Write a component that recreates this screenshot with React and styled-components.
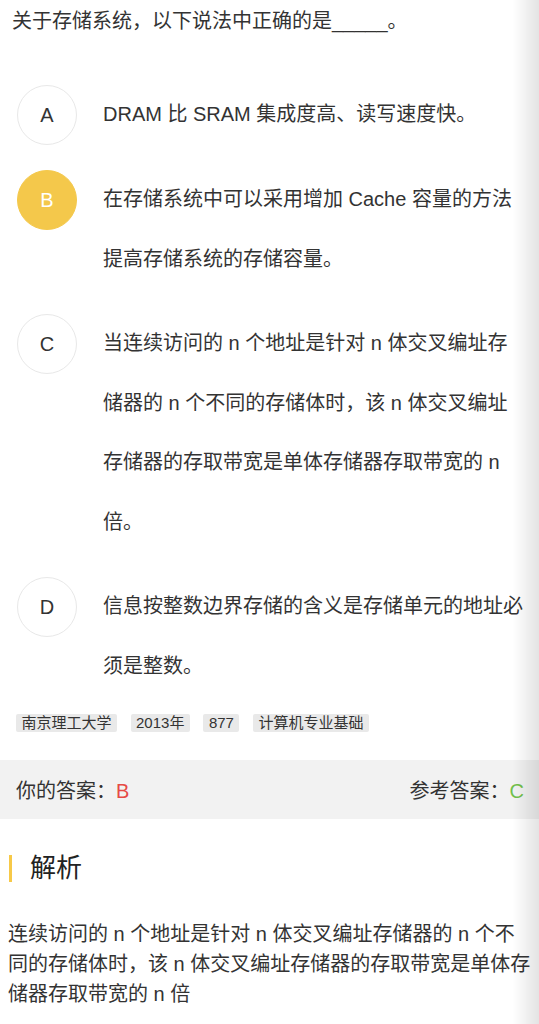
import React from 'react';
import styled, { createGlobalStyle } from 'styled-components';

const GlobalStyle = createGlobalStyle`
  body {
    margin: 0;
    background: #fff;
    font-family: "Liberation Sans", "Noto Sans CJK SC", sans-serif;
    color: #333;
  }
`;

const Page = styled.div`
  width: 539px;
  position: relative;
  padding-bottom: 40px;
`;

const EdgeShade = styled.div`
  position: fixed;
  top: 0;
  right: 0;
  width: 26px;
  height: 100vh;
  pointer-events: none;
  background: linear-gradient(to right, rgba(0, 0, 0, 0), rgba(0, 0, 0, 0.11));
`;

const Question = styled.div`
  padding: 6px 12px 0;
  font-size: 20px;
  line-height: 30px;
`;

const OptionList = styled.div`
  margin-top: 49px;
  display: flex;
  flex-direction: column;
  gap: 25px;
`;

const OptionRow = styled.div`
  display: flex;
  align-items: flex-start;
  padding: 0 14px 0 17px;
  gap: 26px;
`;

const Circle = styled.div`
  flex: none;
  width: 60px;
  height: 60px;
  box-sizing: border-box;
  border-radius: 50%;
  border: 1px solid ${(p) => (p.$picked ? '#f4c84b' : '#e8e8e8')};
  background: ${(p) => (p.$picked ? '#f4c84b' : '#fff')};
  color: ${(p) => (p.$picked ? '#fff' : '#333')};
  display: flex;
  align-items: center;
  justify-content: center;
  font-size: 20px;
`;

const OptionText = styled.div`
  flex: 1;
  font-size: 20px;
  line-height: 59.5px;
`;

const Tags = styled.div`
  display: flex;
  gap: 13.5px;
  padding: 0 16px;
  margin-top: 18px;
`;

const Tag = styled.span`
  font-size: 15px;
  line-height: 18px;
  padding: 0 5.5px;
  background: #e9e9e9;
  border-radius: 2px;
  color: #333;
`;

const AnswerBar = styled.div`
  margin-top: 28px;
  height: 59px;
  background: #f2f2f2;
  display: flex;
  align-items: center;
  justify-content: space-between;
  padding: 0 15px 0 16px;
  font-size: 20px;
`;

const Mark = styled.span`
  color: ${(p) => p.$color};
`;

const SectionTitle = styled.div`
  margin-top: 32px;
  display: flex;
  align-items: center;
  gap: 18px;
  padding-left: 9px;
  font-size: 26px;
  line-height: 34px;
  color: #222;
`;

const TitleBar = styled.span`
  width: 3px;
  height: 27px;
  background: #f7c948;
`;

const Analysis = styled.div`
  margin-top: 34px;
  padding: 0 8px;
  font-size: 20px;
  line-height: 30px;
`;

const options = [
  { key: 'A', text: 'DRAM 比 SRAM 集成度高、读写速度快。' },
  { key: 'B', text: '在存储系统中可以采用增加 Cache 容量的方法提高存储系统的存储容量。', picked: true },
  { key: 'C', text: '当连续访问的 n 个地址是针对 n 体交叉编址存储器的 n 个不同的存储体时，该 n 体交叉编址存储器的存取带宽是单体存储器存取带宽的 n 倍。' },
  { key: 'D', text: '信息按整数边界存储的含义是存储单元的地址必须是整数。' },
];

const tags = ['南京理工大学', '2013年', '877', '计算机专业基础'];

export default function App() {
  return (
    <Page>
      <GlobalStyle />
      <Question>关于存储系统，以下说法中正确的是_____。</Question>
      <OptionList>
        {options.map((o) => (
          <OptionRow key={o.key}>
            <Circle $picked={o.picked}>{o.key}</Circle>
            <OptionText>{o.text}</OptionText>
          </OptionRow>
        ))}
      </OptionList>
      <Tags>
        {tags.map((t) => (
          <Tag key={t}>{t}</Tag>
        ))}
      </Tags>
      <AnswerBar>
        <span>你的答案：<Mark $color="#e64a45">B</Mark></span>
        <span>参考答案：<Mark $color="#72c04b">C</Mark></span>
      </AnswerBar>
      <SectionTitle>
        <TitleBar />
        解析
      </SectionTitle>
      <Analysis>
        连续访问的 n 个地址是针对 n 体交叉编址存储器的 n 个不同的存储体时，该 n 体交叉编址存储器的存取带宽是单体存储器存取带宽的 n 倍
      </Analysis>
      <EdgeShade />
    </Page>
  );
}
